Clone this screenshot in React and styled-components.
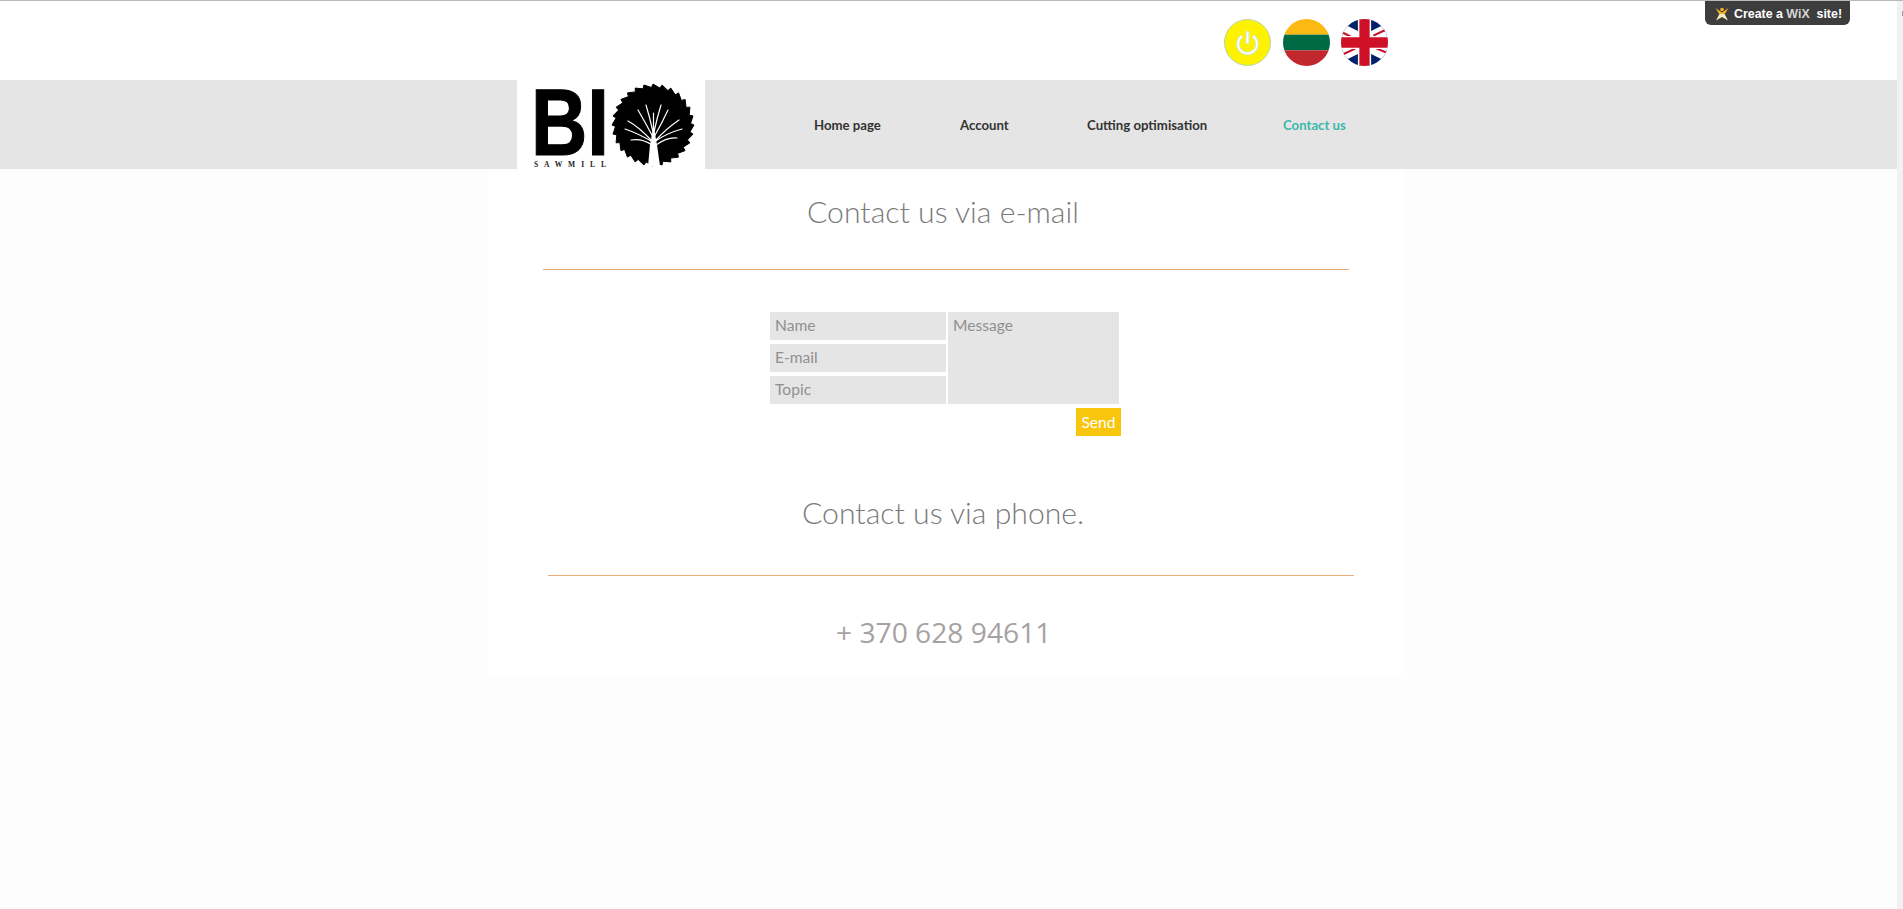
import React from 'react';
import styled, { createGlobalStyle } from 'styled-components';

const Global = createGlobalStyle`
  html, body {
    margin: 0;
    padding: 0;
    background: #fdfdfd;
    font-family: 'Lato', 'Liberation Sans', sans-serif;
    overflow: hidden;
  }
`;

const Page = styled.div`
  position: relative;
  width: 1903px;
  height: 909px;
  box-sizing: border-box;
  border-top: 1px solid #b9b9b9;
  overflow: hidden;
`;

const TopBar = styled.div`
  height: 79px;
  width: 1897px;
  background: #fff;
  display: flex;
  align-items: flex-start;
  padding: 18px 0 0 1224px;
  box-sizing: border-box;
  gap: 11.5px;
`;

const RoundIcon = styled.svg`
  width: 47px;
  height: 47px;
  display: block;
`;

const WixBadge = styled.a`
  position: absolute;
  top: 0;
  left: 1705px;
  width: 145px;
  height: 24px;
  background: #3d3d3d;
  border-radius: 0 0 6px 6px;
  color: #fff;
  font-family: 'Liberation Sans', sans-serif;
  font-weight: 700;
  font-size: 12.4px;
  display: flex;
  align-items: center;
  padding: 1px 0 0 10px;
  box-sizing: border-box;
  gap: 5px;
  white-space: pre;
`;

const WixWord = styled.span`
  color: #d4d4d4;
`;

const NavBand = styled.div`
  height: 89px;
  width: 1897px;
  background: #e5e5e5;
  display: flex;
  padding-left: 517px;
  box-sizing: border-box;
`;

const LogoBox = styled.div`
  width: 188px;
  height: 89px;
  background: #fff;
`;

const Nav = styled.nav`
  display: grid;
  grid-template-columns: 146px 127px 196px auto;
  align-items: start;
  padding: 37px 0 0 109px;
`;

const NavLink = styled.a`
  font-family: 'Lato', sans-serif;
  font-size: 13.2px;
  font-weight: 700;
  line-height: 16px;
  color: ${(p) => (p.$active ? '#3cb8ab' : '#333')};
  white-space: nowrap;
`;

const Panel = styled.main`
  width: 918px;
  height: 506px;
  margin-left: 487px;
  background: #fff;
  box-sizing: border-box;
  display: flex;
  flex-direction: column;
`;

const Heading = styled.h2`
  margin: ${(p) => p.$top}px 0 0 ${(p) => p.$left}px;
  font-family: 'Lato', sans-serif;
  font-size: 30.2px;
  font-weight: 300;
  line-height: 36px;
  color: #7a7a7a;
  width: max-content;
`;

const Rule = styled.hr`
  margin: ${(p) => p.$top}px 0 0 ${(p) => p.$left}px;
  width: 806px;
  height: 1px;
  border: 0;
  background: #e8ae78;
`;

const Form = styled.form`
  margin: 42px 0 0 283px;
  width: 349px;
  display: grid;
  grid-template-columns: 176px 171px;
  column-gap: 2px;
`;

const Fields = styled.div`
  display: flex;
  flex-direction: column;
  gap: 4px;
`;

const Field = styled.div`
  height: 28px;
  background: #e5e5e5;
  color: #918f8f;
  font-size: 15.6px;
  line-height: 27px;
  padding-left: 5px;
  box-sizing: border-box;
`;

const MessageBox = styled(Field)`
  height: 92px;
`;

const SendButton = styled.button`
  grid-column: 1 / 3;
  justify-self: end;
  margin: 4px -2px 0 0;
  width: 45px;
  height: 28px;
  padding: 0 0 1px;
  border: 0;
  background: #f8c70d;
  color: #fff;
  font-family: 'Lato', sans-serif;
  font-size: 15.6px;
`;

const Phone = styled.div`
  margin: 38px 0 0 349px;
  font-family: 'Open Sans', 'Liberation Sans', sans-serif;
  font-size: 28.2px;
  line-height: 36px;
  color: #a6a2a2;
  width: max-content;
`;

const Scrollbar = styled.div`
  position: absolute;
  top: 0;
  right: 0;
  bottom: 0;
  width: 6px;
  background: #f1f1f1;
`;

const ScrollThumb = styled.div`
  margin: 10px 0 0 5px;
  width: 1px;
  height: 5px;
  background: #9a9a9a;
`;

const PowerIcon = () => (
  <RoundIcon viewBox="0 0 47 47">
    <circle cx="23.5" cy="23.5" r="23" fill="#fff200" stroke="#b8d4a8" strokeWidth="1" />
    <path d="M18 17.2 A9.5 9.5 0 1 0 29 17.2" fill="none" stroke="#cfe6dc" strokeWidth="3.4" />
    <path d="M18 17.2 A9.5 9.5 0 1 0 29 17.2" fill="none" stroke="#fff" strokeWidth="1.6" />
    <rect x="21.6" y="12" width="3.8" height="13" rx="1" fill="#cfe6dc" />
    <rect x="22.6" y="12.6" width="1.8" height="11.8" fill="#fff" />
  </RoundIcon>
);

const LtFlag = () => (
  <RoundIcon viewBox="0 0 48 48">
    <defs>
      <clipPath id="lt">
        <circle cx="24" cy="24" r="24" />
      </clipPath>
    </defs>
    <g clipPath="url(#lt)">
      <rect width="48" height="16" fill="#fdb913" />
      <rect y="16" width="48" height="16" fill="#006a44" />
      <rect y="32" width="48" height="16" fill="#c1272d" />
    </g>
  </RoundIcon>
);

const UkFlag = () => (
  <RoundIcon viewBox="0 0 48 48">
    <defs>
      <clipPath id="uk">
        <circle cx="24" cy="24" r="24" />
      </clipPath>
    </defs>
    <g clipPath="url(#uk)">
      <rect width="48" height="48" fill="#012169" />
      <path d="M0 12 L48 36 M48 12 L0 36" stroke="#fff" strokeWidth="15" />
      <path d="M0 13 L12 19 M48 10 L33 17 M0 37 L15 30 M48 35 L36 30" stroke="#c8102e" strokeWidth="2.2" />
      <path d="M24 0 V48 M0 24 H48" stroke="#fff" strokeWidth="13.5" />
      <path d="M24 0 V48 M0 24 H48" stroke="#ce1126" strokeWidth="10.5" />
    </g>
  </RoundIcon>
);

// saw blade outline: a ring of slanted teeth round the logo's centre
const sawPath = (cx, cy, outer, inner, teeth) => {
  const points = [];
  for (let i = 0; i < teeth; i++) {
    const a = (i / teeth) * Math.PI * 2;
    const b = ((i + 0.82) / teeth) * Math.PI * 2;
    points.push(`${(cx + outer * Math.cos(a)).toFixed(1)} ${(cy + outer * Math.sin(a)).toFixed(1)}`);
    points.push(`${(cx + inner * Math.cos(b)).toFixed(1)} ${(cy + inner * Math.sin(b)).toFixed(1)}`);
  }
  return `M${points.join(' L')} Z`;
};

const Logo = () => (
  <svg width="188" height="89" viewBox="0 0 188 89" style={{ display: 'block' }}>
    <text x="14" y="75" fontFamily="Liberation Sans" fontWeight="700" fontSize="95" fill="#000" stroke="#000" strokeWidth="1.2" textLength="78" lengthAdjust="spacingAndGlyphs">BI</text>
    <text x="17" y="87" fontFamily="Liberation Serif" fontSize="7.5" fontWeight="700" fill="#222" textLength="72">SAWMILL</text>
    <path d={sawPath(136, 45, 41, 37.5, 28)} fill="#000" stroke="#000" strokeWidth="1" strokeLinejoin="round" />
    <g stroke="#fff" strokeWidth="1.2" fill="none" strokeLinecap="round">
      <path d="M136 52 Q133 38 129 25 M137 52 Q140 38 144 25 M136.500 50 L136.500 33 M136 57 Q128 42 121 30 M137 57 Q145 43 151 30 M135 61 Q122 47 111 41 M138 61 Q150 48 162 40 M136 62 Q120 53 108 49 M137 62 Q150 53 165 49 M135 65 Q125 58 114 60 M139 65 Q150 57 160 58" />
    </g>
    <path d="M136 48 L137 48 L140 65 L143 86 L131 86 L133 65 Z" fill="#fff" />
  </svg>
);

const WixStar = () => (
  <svg width="14" height="14" viewBox="0 0 14 14">
    <circle cx="7" cy="2.5" r="1.8" fill="#f0b429" />
    <path d="M0.500 1 L7 5.500 L13.500 1 L9.500 7.500 L4.500 7.500 Z" fill="#f0b429" />
    <path d="M4.500 7 L9.500 7 L13 13.500 L7 10 L1 13.500 Z" fill="#f7ecc0" />
  </svg>
);

const navItems = [
  { label: 'Home page' },
  { label: 'Account' },
  { label: 'Cutting optimisation' },
  { label: 'Contact us', active: true },
];

export default function App() {
  return (
    <>
      <Global />
      <Page>
        <TopBar>
          <PowerIcon />
          <LtFlag />
          <UkFlag />
        </TopBar>
        <WixBadge>
          <WixStar />
          <span>Create a <WixWord>WiX</WixWord>  site!</span>
        </WixBadge>
        <NavBand>
          <LogoBox>
            <Logo />
          </LogoBox>
          <Nav>
            {navItems.map((item) => (
              <NavLink key={item.label} $active={item.active}>
                {item.label}
              </NavLink>
            ))}
          </Nav>
        </NavBand>
        <Panel>
          <Heading $top={24} $left={320}>Contact us via e-mail</Heading>
          <Rule $top={40} $left={56} />
          <Form>
            <Fields>
              <Field>Name</Field>
              <Field>E-mail</Field>
              <Field>Topic</Field>
            </Fields>
            <MessageBox>Message</MessageBox>
            <SendButton type="button">Send</SendButton>
          </Form>
          <Heading $top={58} $left={315}>Contact us via phone.</Heading>
          <Rule $top={45} $left={61} />
          <Phone>+ 370 628 94611</Phone>
        </Panel>
        <Scrollbar>
          <ScrollThumb />
        </Scrollbar>
      </Page>
    </>
  );
}
